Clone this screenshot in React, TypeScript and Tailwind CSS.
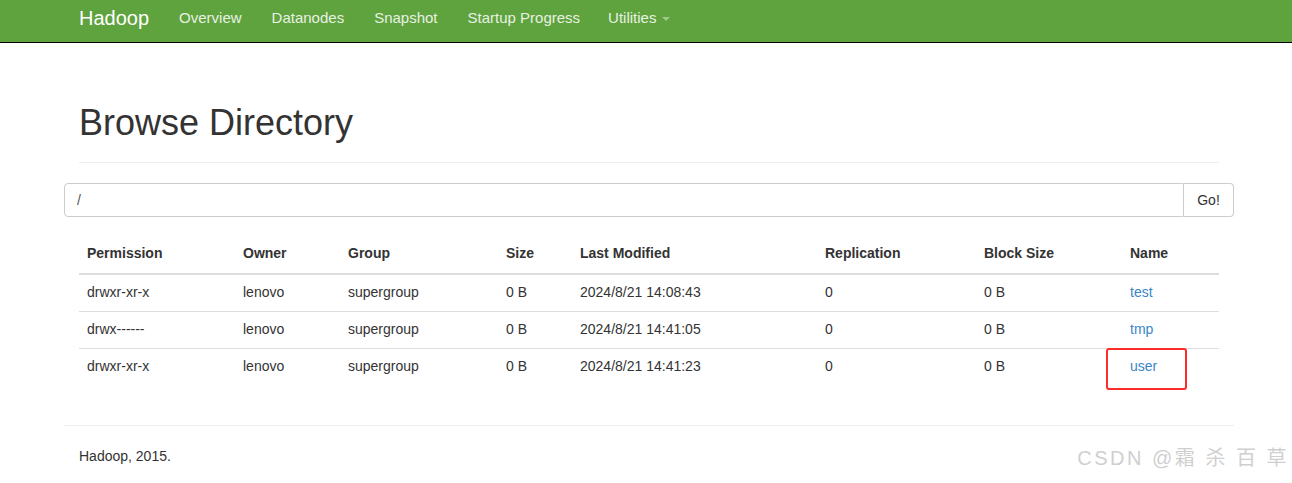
import React from 'react';

type Row = {
  permission: string;
  owner: string;
  group: string;
  size: string;
  modified: string;
  replication: string;
  blockSize: string;
  name: string;
};

const ROWS: Row[] = [
  { permission: 'drwxr-xr-x', owner: 'lenovo', group: 'supergroup', size: '0 B', modified: '2024/8/21 14:08:43', replication: '0', blockSize: '0 B', name: 'test' },
  { permission: 'drwx------', owner: 'lenovo', group: 'supergroup', size: '0 B', modified: '2024/8/21 14:41:05', replication: '0', blockSize: '0 B', name: 'tmp' },
  { permission: 'drwxr-xr-x', owner: 'lenovo', group: 'supergroup', size: '0 B', modified: '2024/8/21 14:41:23', replication: '0', blockSize: '0 B', name: 'user' },
];

const NAV = ['Overview', 'Datanodes', 'Snapshot', 'Startup Progress'];

const COLS = ['w-[156px]', 'w-[105px]', 'w-[158px]', 'w-[74px]', 'w-[245px]', 'w-[159px]', 'w-[146px]', ''];

export default function App() {
  return (
    <div className="min-h-[483px] bg-white text-[14px] text-[#333] font-['Liberation_Sans','Noto_Sans_CJK_SC',sans-serif] relative">
      <nav className="h-[43px] bg-[#5fa33e] border-b border-black">
        <div className="ml-[64px] w-[1170px] px-[15px] flex items-center h-full pb-[6px]">
          <span className="text-[20px] text-white pr-[15px]">Hadoop</span>
          {NAV.map((n) => (
            <span key={n} className="px-[15px] text-[15px] text-[#e8f1e2]">{n}</span>
          ))}
          <span className="pl-[13px] pr-[15px] text-[15px] text-[#e8f1e2] flex items-center gap-[6px]">
            Utilities
            <span className="inline-block w-0 h-0 border-x-[4px] border-x-transparent border-t-[4px] border-t-[#9fc98a] mt-[2px]" />
          </span>
        </div>
      </nav>

      <div className="ml-[64px] w-[1170px] px-[15px]">
        <div className="mt-[60px] pb-[19px] mb-[20px] border-b border-[#eee]">
          <h1 className="text-[36px] leading-[40px]">Browse Directory</h1>
        </div>
      </div>

      <div className="ml-[64px] w-[1170px]">
        <div className="flex h-[34px]">
          <div className="flex-1 border border-[#ccc] rounded-l-[4px] px-[12px] flex items-center text-[#555]">/</div>
          <div className="w-[50px] border border-l-0 border-[#ccc] rounded-r-[4px] flex items-center justify-center">Go!</div>
        </div>
      </div>

      <div className="ml-[64px] w-[1170px] px-[15px] mt-[22px]">
        <table className="w-full border-collapse">
          <thead>
            <tr className="border-b-2 border-[#ddd]">
              {['Permission', 'Owner', 'Group', 'Size', 'Last Modified', 'Replication', 'Block Size', 'Name'].map((h, i) => (
                <th key={h} className={`${COLS[i]} text-left font-bold px-[8px] h-[35px] align-bottom pb-[9px]`}>{h}</th>
              ))}
            </tr>
          </thead>
          <tbody>
            {ROWS.map((r, idx) => (
              <tr key={r.name} className={idx > 0 ? 'border-t border-[#ddd]' : ''}>
                <td className="px-[8px] h-[37px]">{r.permission}</td>
                <td className="px-[8px]">{r.owner}</td>
                <td className="px-[8px]">{r.group}</td>
                <td className="px-[8px]">{r.size}</td>
                <td className="px-[8px]">{r.modified}</td>
                <td className="px-[8px]">{r.replication}</td>
                <td className="px-[8px]">{r.blockSize}</td>
                <td className="px-[8px] text-[#3a86c8] relative">
                  {r.name}
                  {r.name === 'user' && (
                    <span className="absolute left-[-16px] top-[-1px] w-[81px] h-[42px] border-2 border-[#ff2a2a] rounded-[3px]" />
                  )}
                </td>
              </tr>
            ))}
          </tbody>
        </table>
      </div>

      <div className="ml-[64px] w-[1170px] mt-[40px] border-t border-[#eee]">
        <p className="px-[15px] pt-[20px]">Hadoop, 2015.</p>
      </div>

      <div className="absolute right-[3px] bottom-[10px] text-[20px] text-[#cfcfcf] tracking-[2.5px]">CSDN @霜 杀 百 草</div>
    </div>
  );
}
